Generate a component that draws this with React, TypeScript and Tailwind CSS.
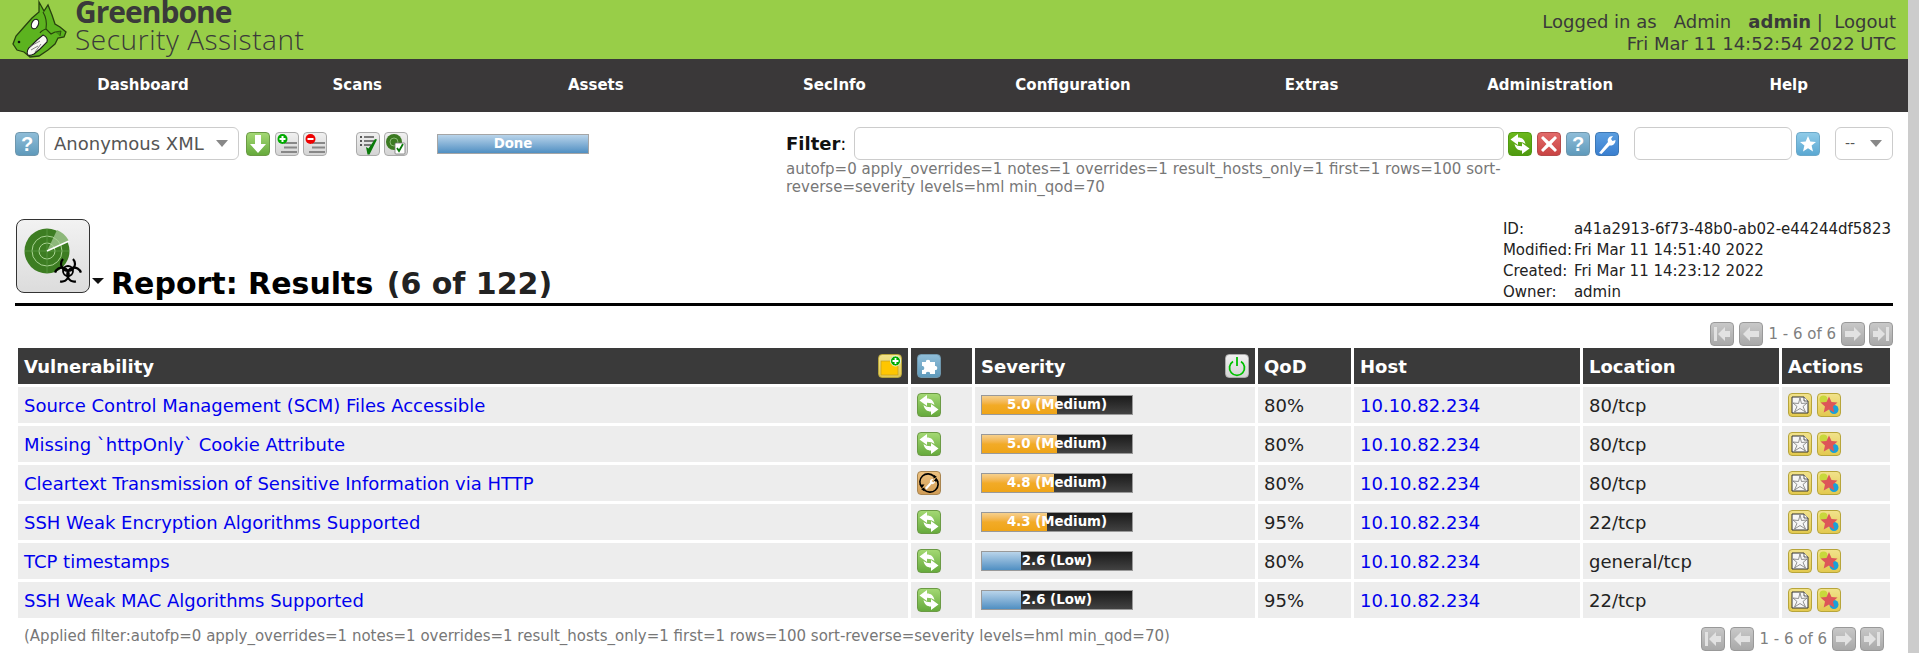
import React from "react";

const font = { fontFamily: '"DejaVu Sans", sans-serif' };

const nav = ["Dashboard", "Scans", "Assets", "SecInfo", "Configuration", "Extras", "Administration", "Help"];

type Row = { name: string; sev: number; label: string; qod: string; loc: string; wrench?: boolean };

const rows: Row[] = [
  { name: "Source Control Management (SCM) Files Accessible", sev: 5.0, label: "5.0 (Medium)", qod: "80%", loc: "80/tcp" },
  { name: "Missing `httpOnly` Cookie Attribute", sev: 5.0, label: "5.0 (Medium)", qod: "80%", loc: "80/tcp" },
  { name: "Cleartext Transmission of Sensitive Information via HTTP", sev: 4.8, label: "4.8 (Medium)", qod: "80%", loc: "80/tcp", wrench: true },
  { name: "SSH Weak Encryption Algorithms Supported", sev: 4.3, label: "4.3 (Medium)", qod: "95%", loc: "22/tcp" },
  { name: "TCP timestamps", sev: 2.6, label: "2.6 (Low)", qod: "80%", loc: "general/tcp" },
  { name: "SSH Weak MAC Algorithms Supported", sev: 2.6, label: "2.6 (Low)", qod: "95%", loc: "22/tcp" },
];

const filterText =
  "autofp=0 apply_overrides=1 notes=1 overrides=1 result_hosts_only=1 first=1 rows=100 sort-reverse=severity levels=hml min_qod=70";

// rounded 24px tile every gsa icon sits on
function Tile({ tone, children }: { tone: string; children: React.ReactNode }) {
  return (
    <span className={`block h-6 w-6 shrink-0 overflow-hidden rounded-[4px] border ${tone}`}>
      <svg viewBox="0 0 22 22" width="22" height="22" className="block">
        {children}
      </svg>
    </span>
  );
}

const grayTile = "border-[#aaa] bg-gradient-to-b from-[#f0f0f0] to-[#d4d4d4]";
const blueTile = "border-[#6f97ad] bg-gradient-to-b from-[#8fbdd8] to-[#5f9abb]";
const greenTile = "border-[#6b9a45] bg-gradient-to-b from-[#a3d873] to-[#66aa3c]";
const yellowTile = "border-[#b7a53a] bg-gradient-to-b from-[#f1e28a] to-[#e3c94e]";
const pageTile = "border-[#999] bg-gradient-to-b from-[#c8c8c8] to-[#a9a9a9]";

function Help() {
  return (
    <Tile tone={blueTile}>
      <text x="11" y="18" textAnchor="middle" fontSize="20" fontWeight="700" fill="#fff" fontFamily="Liberation Sans, sans-serif">?</text>
    </Tile>
  );
}

function Lines({ badge }: { badge: "add" | "del" }) {
  return (
    <Tile tone={grayTile}>
      <path d="M8 10h13M8 14.500h13M5 19h16" stroke="#888" strokeWidth="1.800" />
      <circle cx="6.500" cy="6" r="5" fill={badge === "add" ? "#0a0" : "#e00"} />
      <path d={badge === "add" ? "M3.500 6h6M6.500 3v6" : "M3.500 6h6"} stroke="#fff" strokeWidth="2" />
    </Tile>
  );
}

function Refresh({ tone = greenTile }: { tone?: string }) {
  const arrow = "M1.500 6.500L9 1v3.500c4 0 6.500 2 7.500 6.500-2-1.500-4-2.200-7.500-2.200V12z";
  return (
    <Tile tone={tone}>
      <path d={arrow} fill="#fff" />
      <path d={arrow} fill="#fff" transform="rotate(180 11 11)" />
    </Tile>
  );
}

function Override() {
  return (
    <Tile tone="border-[#a98550] bg-gradient-to-b from-[#edc17f] to-[#d19c55]">
      <path d="M4 15.500A8 8 0 0 1 16 4.500M18 6.500A8 8 0 0 1 6 17.500" fill="none" stroke="#000" strokeWidth="1.600" />
      <path d="M1.500 12.500h5l-2.500 3.500zM15.500 2.500v4l3.500-1.500zM20.500 9.500h-5l2.500-3.500zM6.500 19.500v-4L3 17z" fill="#000" />
      <path d="M7 16l5-5.500c-.6-2 1-3.800 3.400-3.300l-1.800 1.900 1.600 1.500 1.800-1.800c.4 2.300-1.500 3.900-3.400 3.200L8.600 17.500z" fill="#fff" />
    </Tile>
  );
}

function NoteIcon() {
  return (
    <Tile tone={yellowTile}>
      <path d="M3 3h12l4 4v12H3z" fill="#f6f6f6" stroke="#333" strokeWidth="1" />
      <path d="M15 3v4h4" fill="#fff" stroke="#333" strokeWidth=".8" />
      <path d="M11 4l1.500 5.500L18 9l-4 3.500 2.500 5.500-5.500-3.500L5.500 18 8 12.500 4 9l5.500.5z" fill="none" stroke="#777" strokeWidth=".8" />
    </Tile>
  );
}

function OverrideStar() {
  return (
    <Tile tone={yellowTile}>
      <circle cx="5.500" cy="5.500" r="4" fill="#c8d83c" />
      <circle cx="16" cy="15.500" r="4.500" fill="#1aa0d8" />
      <path d="M11 2.500l2.500 5.500 6 .6-4.500 4 1.300 6L11 15.500 5.700 18.600l1.300-6-4.500-4 6-.6z" fill="#dd5558" />
    </Tile>
  );
}

function PageIcon({ d }: { d: string }) {
  return (
    <Tile tone={pageTile}>
      <path d={d} fill="#e2e2e2" />
    </Tile>
  );
}

function Pager() {
  return (
    <div className="flex items-center text-[15px] text-[#808080]">
      <PageIcon d="M3 4h3v14H3zM7 11l7-7v4h5v6h-5v4z" />
      <span className="ml-[5px]" />
      <PageIcon d="M3 11l7-7v4h9v6h-9v4z" />
      <span className="mx-[5px] whitespace-nowrap">1 - 6 of 6</span>
      <PageIcon d="M19 11l-7-7v4H3v6h9v4z" />
      <span className="ml-[4px]" />
      <PageIcon d="M16 4h3v14h-3zM15 11L8 4v4H3v6h5v4z" />
    </div>
  );
}

function SeverityBar({ sev, label }: { sev: number; label: string }) {
  const low = sev < 4;
  return (
    <div className="relative h-5 w-[152px] border border-[#999] bg-gradient-to-b from-[#1b1b1b] to-[#424242]">
      <div
        className={`h-full bg-gradient-to-b ${low ? "from-[#b9d4ea] to-[#4f8fc2]" : "from-[#f6d08c] via-[#f2ab27] to-[#efa416]"}`}
        style={{ width: `${sev * 10}%` }}
      />
      <div className="absolute inset-0 text-center text-[13.33px] font-bold leading-[18px] text-white">{label}</div>
    </div>
  );
}

function Logo() {
  return (
    <svg viewBox="0 0 70 59" width="70" height="59" className="ml-[2px] shrink-0">
      <path
        d="M37 2l5 9 4-6 4 10 3 9 5 3 6 5-2 5-6 1-3 6-7 6-9 6-9 1-6-5-7-2-4-6 3-8 8-9 8-9 7-6z"
        fill="#5cb31f"
        stroke="#27400f"
        strokeWidth="1.300"
      />
      <path d="M41 12c3 5 4 11 3 17l5 5 4-2M44 29c-3 1-5 2-6 4" fill="none" stroke="#27400f" strokeWidth="1.100" />
      <path d="M53 32l6-1-1 5" fill="#3f8f14" stroke="#27400f" strokeWidth=".8" />
      <ellipse cx="33" cy="24" rx="3.300" ry="5" transform="rotate(25 33 24)" fill="#fff" stroke="#1c1c1c" strokeWidth="1.100" />
      <path d="M26 55c-2-3 0-7 3-9l6-6 6-5c3 1 5 4 4 7l-7 7-6 5c-2 1-4 2-6 1z" fill="#f7f7f2" stroke="#1c1c1c" strokeWidth="1.100" />
      <path d="M29 50l7-4M33 52l6-8M27 47l11-6" stroke="#666" strokeWidth=".8" />
      <circle cx="17" cy="42" r="1.300" fill="#111" />
    </svg>
  );
}

export default function App() {
  return (
    <div className="flex h-[653px] w-full overflow-hidden bg-white" style={font}>
      <div className="min-w-0 flex-1">
        <header className="flex h-[59px] items-start justify-between bg-[#98ce48]">
          <div className="flex items-start">
            <Logo />
            <div className="ml-[3px] text-[#3a3a3a]" style={{ fontFamily: '"Open Sans", sans-serif' }}>
              <div className="text-[30px] font-bold leading-[24px] tracking-[-1px]">Greenbone</div>
              <div className="mt-px text-[28px] font-light leading-[28px] tracking-[.55px]">Security Assistant</div>
            </div>
          </div>
          <div className="pr-3 pt-[11px] text-right text-[18px] leading-[22px] text-[#3a3a3a]">
            <div className="whitespace-pre">
              Logged in as   Admin   <b>admin</b> |  Logout
            </div>
            <div>Fri Mar 11 14:52:54 2022 UTC</div>
          </div>
        </header>

        <nav className="grid h-[53px] grid-cols-[190px_repeat(7,1fr)] items-center bg-[#3a3839] pl-12 text-center text-[15px] font-bold text-white">
          {nav.map((n) => (
            <a key={n}>{n}</a>
          ))}
        </nav>

        <section className="flex h-[108px] px-[15px] pt-[15px]">
          <div className="flex h-[33px] w-[772px] items-center">
            <Help />
            <div className="ml-[5px] flex h-[33px] w-[195px] items-center justify-between rounded-[6px] border border-[#ccc] pl-[9px] pr-[10px] text-[18px] text-[#555]">
              Anonymous XML
              <span className="h-0 w-0 border-x-[6px] border-t-[7px] border-x-transparent border-t-[#888]" />
            </div>
            <div className="ml-[7px]">
              <Tile tone={greenTile}>
                <path d="M8 2h6v9h5l-8 9-8-9h5z" fill="#fff" />
              </Tile>
            </div>
            <div className="ml-[5px]"><Lines badge="add" /></div>
            <div className="ml-1"><Lines badge="del" /></div>
            <div className="ml-[29px]">
              <Tile tone={grayTile}>
                <path d="M3 3h2v2H3zM3 7h2v2H3zM3 11h2v2H3z" fill="#555" />
                <path d="M7 4h10M7 8h10M7 12h7" stroke="#555" strokeWidth="1.400" />
                <path d="M9 14l2.500 1.500L18 6l2 .5-7.500 15H10.500z" fill="#0a7a0a" />
              </Tile>
            </div>
            <div className="ml-1">
              <Tile tone={grayTile}>
                <circle cx="9" cy="9" r="8" fill="#3b7a22" />
                <circle cx="9" cy="9" r="4" fill="none" stroke="#9cc98a" strokeWidth=".8" />
                <rect x="10" y="10" width="10" height="11" rx="1" fill="#fff" stroke="#777" strokeWidth=".8" />
                <path d="M12 15l2 3 4-7" fill="none" stroke="#0a7a0a" strokeWidth="1.800" />
              </Tile>
            </div>
            <div className="ml-[29px] flex h-5 w-[152px] items-center justify-center border border-[#a5a5a5] bg-gradient-to-b from-[#b9d4ea] to-[#4f8fc2] text-[13.33px] font-bold text-white">
              Done
            </div>
          </div>

          <div className="flex flex-1 items-start">
            <div className="w-[722px]">
              <div className="flex h-[33px] items-center">
                <span className="w-[68px] text-[18px] text-[#111]"><b>Filter</b>:</span>
                <div className="h-[33px] w-[650px] shrink-0 rounded-[6px] border border-[#ccc]" />
              </div>
              <div className="w-[724px] text-[15px] leading-[18px] text-[#777]">{filterText}</div>
            </div>
            <div className="flex h-[33px] items-center">
              <Refresh tone="border-[#4f9a10] bg-gradient-to-b from-[#6cb81c] to-[#4f9a10]" />
              <div className="ml-[5px]">
                <Tile tone="border-[#b54b4b] bg-gradient-to-b from-[#e26a6a] to-[#c94343]">
                  <path d="M5 3l6 5.500L17 3l2 2-5.500 6 5.500 6-2 2-6-5.500L5 19l-2-2 5.500-6L3 5z" fill="#fff" />
                </Tile>
              </div>
              <div className="ml-[5px]"><Help /></div>
              <div className="ml-[5px]">
                <Tile tone="border-[#3d78b5] bg-gradient-to-b from-[#5b9ee0] to-[#3a7fd0]">
                  <path d="M3 20l9-11c-1-3 1-6 5-6l-2 3 1.500 2 3-1c0 4-3 6-6 5.500L5.500 21z" fill="#fff" />
                </Tile>
              </div>
              <div className="ml-[15px] h-[33px] w-[158px] rounded-[6px] border border-[#ccc]" />
              <div className="ml-1">
                <Tile tone="border-[#6ca9c9] bg-gradient-to-b from-[#8fcbe8] to-[#5aa8d2]">
                  <path d="M11 3l2.300 5.500 5.700.4-4.400 3.700 1.400 5.800L11 15.300l-5 3.100 1.400-5.800L3 8.900l5.700-.4z" fill="#fff" />
                </Tile>
              </div>
              <div className="ml-[15px] flex h-[33px] w-[58px] items-center justify-between rounded-[6px] border border-[#ccc] pl-[9px] pr-[10px] text-[14px] text-[#555]">
                --
                <span className="h-0 w-0 border-x-[6px] border-t-[7px] border-x-transparent border-t-[#888]" />
              </div>
            </div>
          </div>
        </section>

        <section className="mx-[15px] flex h-[86px] items-end justify-between border-b-[3px] border-black">
          <div className="flex items-end">
            <div className="mb-[10px] ml-px flex h-[74px] w-[74px] items-center justify-center rounded-[8px] border border-[#333] bg-gradient-to-b from-[#f2f2f2] to-[#dcdcdc]">
              <svg viewBox="0 0 72 72" width="72" height="72">
                <circle cx="30" cy="31" r="22.500" fill="#3d7d22" />
                <path d="M30 31L52 21A23 23 0 0 0 40 10z" fill="#8db87a" />
                <circle cx="30" cy="31" r="8" fill="none" stroke="#a9d393" strokeWidth="1" />
                <circle cx="30" cy="31" r="15" fill="none" stroke="#a9d393" strokeWidth="1" />
                <path d="M8 31h44M30 9v44" stroke="#5c9a44" strokeWidth=".8" />
                <path d="M30 31L52 21" stroke="#fff" strokeWidth="1.500" />
                <g fill="none" stroke="#000" strokeWidth="2.200">
                  <circle cx="51" cy="51" r="5" strokeWidth="1.800" />
                  <path d="M46 39A7 7 0 1 0 56 39" />
                  <path d="M46 39A7 7 0 1 0 56 39" transform="rotate(120 51 51)" />
                  <path d="M46 39A7 7 0 1 0 56 39" transform="rotate(240 51 51)" />
                </g>
              </svg>
            </div>
            <span className="mb-[19px] ml-[2px] h-0 w-0 border-x-[6px] border-t-[6px] border-x-transparent border-t-[#111]" />
            <h1 className="ml-[7px] whitespace-pre text-[30px] font-bold leading-[38px] text-black">
              Report: Results <span className="ml-[3px] text-[#222]">(6 of 122)</span>
            </h1>
          </div>
          <table className="mr-[2px] text-[15px] leading-[21px] text-[#222]">
            <tbody>
              <tr><td className="w-[71px]">ID:</td><td>a41a2913-6f73-48b0-ab02-e44244df5823</td></tr>
              <tr><td>Modified:</td><td>Fri Mar 11 14:51:40 2022</td></tr>
              <tr><td>Created:</td><td>Fri Mar 11 14:23:12 2022</td></tr>
              <tr><td>Owner:</td><td>admin</td></tr>
            </tbody>
          </table>
        </section>

        <div className="mx-[15px] mt-4 flex justify-end"><Pager /></div>

        <table className="mx-[15px] -mt-px w-[1878px] table-fixed border-separate border-spacing-[3px] text-[18px] text-[#222]">
          <colgroup>
            <col className="w-[890px]" />
            <col className="w-[61px]" />
            <col className="w-[280px]" />
            <col className="w-[93px]" />
            <col className="w-[226px]" />
            <col className="w-[196px]" />
            <col className="w-[108px]" />
          </colgroup>
          <thead>
            <tr className="h-9 bg-[#3a3a3a] text-left text-white">
              <th className="px-[6px]">
                <div className="flex items-center justify-between">
                  Vulnerability
                  <Tile tone={yellowTile}>
                    <rect x="2" y="6" width="17" height="14" fill="#ffc600" stroke="#b8962a" strokeWidth=".6" />
                    <circle cx="16.500" cy="6" r="5" fill="#0a0" stroke="#fff" strokeWidth=".8" />
                    <path d="M13.500 6h6M16.500 3v6" stroke="#fff" strokeWidth="1.800" />
                  </Tile>
                </div>
              </th>
              <th className="px-[6px]">
                <Tile tone={blueTile}>
                  <path d="M4 7h4c-1-3 5-3 4 0h5v4c3-1 3 5 0 4v4h-5c1-3-5-3-4 0H4v-4c3 1 3-5 0-4z" fill="#fff" />
                </Tile>
              </th>
              <th className="px-[6px]">
                <div className="flex items-center justify-between">
                  Severity
                  <Tile tone={grayTile}>
                    <path d="M7 6.500a7.500 7.500 0 1 0 8 0" fill="none" stroke="#00c000" strokeWidth="1.800" />
                    <path d="M11 2v9" stroke="#00c000" strokeWidth="1.800" />
                  </Tile>
                </div>
              </th>
              <th className="px-[6px]">QoD</th>
              <th className="px-[6px]">Host</th>
              <th className="px-[6px]">Location</th>
              <th className="px-[6px]">Actions</th>
            </tr>
          </thead>
          <tbody>
            {rows.map((r) => (
              <tr key={r.name} className="h-9 bg-[#ededed]">
                <td className="truncate px-[6px]"><a className="text-[#0000ee]">{r.name}</a></td>
                <td className="px-[6px]">{r.wrench ? <Override /> : <Refresh />}</td>
                <td className="px-[6px]"><SeverityBar sev={r.sev} label={r.label} /></td>
                <td className="px-[6px]">{r.qod}</td>
                <td className="px-[6px]"><a className="text-[#0000ee]">10.10.82.234</a></td>
                <td className="px-[6px]">{r.loc}</td>
                <td className="px-[6px]">
                  <div className="flex gap-[5px]"><NoteIcon /><OverrideStar /></div>
                </td>
              </tr>
            ))}
          </tbody>
        </table>

        <div className="mx-[15px] mt-[6px] flex items-start justify-between">
          <span className="pl-[9px] text-[15px] leading-[18px] text-[#777]">(Applied filter:{filterText})</span>
          <div className="pr-[9px]"><Pager /></div>
        </div>
      </div>
      <div className="w-[11px] shrink-0 bg-[#cccccc]" />
    </div>
  );
}
